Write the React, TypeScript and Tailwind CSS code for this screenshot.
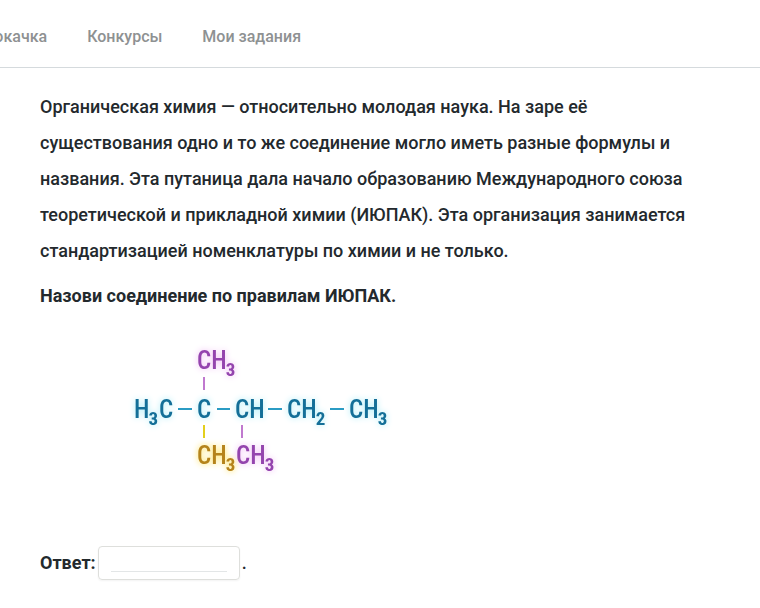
import React, { useState } from "react";

type GroupProps = {
  x: number;
  y: number;
  color: string;
  atoms: string;
  sub?: string;
};

const navLinks = ["Прокачка", "Конкурсы", "Мои задания"];

const Group = (props: GroupProps) => {
  const { x, y, color, atoms, sub } = props;

  return (
    <text x={x} y={y} className={color} fontSize="25">
      {atoms}
      {sub && (
        <tspan dx="-1" dy="7" fontSize="19" fontWeight="700">
          {sub}
        </tspan>
      )}
    </text>
  );
};

const Formula = () => (
  <svg
    width="272"
    height="140"
    viewBox="128 340 272 140"
    role="img"
    aria-label="Структурная формула"
    className="font-['Roboto_Condensed','Liberation_Sans_Narrow','Liberation_Sans',sans-serif] font-medium"
  >
    <g className="drop-shadow-[0_0_3px_#f0b8f5]">
      <Group x={197} y={369} color="fill-[#9444ae]" atoms="CH" sub="3" />
      <Group x={236} y={464} color="fill-[#9444ae]" atoms="CH" sub="3" />
    </g>
    <g className="drop-shadow-[0_0_3px_#a5ecf8]">
      <Group x={134} y={418} color="fill-[#146f98]" atoms="H" sub="3" />
      <Group x={159} y={418} color="fill-[#146f98]" atoms="C" />
      <Group x={197} y={418} color="fill-[#146f98]" atoms="C" />
      <Group x={235} y={418} color="fill-[#146f98]" atoms="CH" />
      <Group x={287} y={418} color="fill-[#146f98]" atoms="CH" sub="2" />
      <Group x={349} y={418} color="fill-[#146f98]" atoms="CH" sub="3" />
    </g>
    <g className="drop-shadow-[0_0_3px_#ffe04d]">
      <Group x={197} y={464} color="fill-[#b5831a]" atoms="CH" sub="3" />
    </g>
    <path
      d="M178 409h14M217 409h13M268 409h14M330 409h14"
      strokeWidth="2"
      className="stroke-[#2b9cc4]"
    />
    <path
      d="M204 377v13M242 425v13"
      strokeWidth="2"
      className="stroke-[#c079cf]"
    />
    <path d="M204 425v13" strokeWidth="2" className="stroke-[#e3cf1c]" />
  </svg>
);

const App = () => {
  const [answer, setAnswer] = useState<string>("");

  return (
    <div className="min-h-screen overflow-x-hidden bg-white font-[Roboto,'Liberation_Sans',sans-serif] text-[#23292d]">
      <header className="border-b border-[#d5dadd]">
        <nav className="-ml-[26px] flex h-[67px] items-center gap-10 pt-1.5 text-base font-medium text-[#8e9192]">
          {navLinks.map((link) => (
            <a key={link} href="#">
              {link}
            </a>
          ))}
        </nav>
      </header>

      <main className="pb-6 pl-10 pr-16 pt-[21px] text-lg font-medium">
        <p className="leading-9">
          Органическая химия — относительно молодая наука. На заре её
          существования одно и то же соединение могло иметь разные формулы и
          названия. Эта путаница дала начало образованию Международного союза
          теоретической и прикладной химии (ИЮПАК). Эта организация занимается
          стандартизацией номенклатуры по химии и не только.
        </p>
        <p className="mt-[9px] font-bold leading-9">
          Назови соединение по правилам ИЮПАК.
        </p>

        <div className="ml-[88px] mt-[26px]">
          <Formula />
        </div>

        <div className="mt-[66px] flex items-center">
          <label htmlFor="answer" className="mr-0.5 font-bold">
            Ответ:
          </label>
          <div className="flex h-[34px] w-[142px] rounded border border-[#dedfdc] px-3 pb-[7px] pt-1 shadow-xs">
            <input
              id="answer"
              type="text"
              value={answer}
              onChange={(e) => setAnswer(e.target.value)}
              className="w-full border-b border-[#e3e6e7] outline-none"
            />
          </div>
          <span className="ml-0.5">.</span>
        </div>
      </main>
    </div>
  );
};

export default App;
